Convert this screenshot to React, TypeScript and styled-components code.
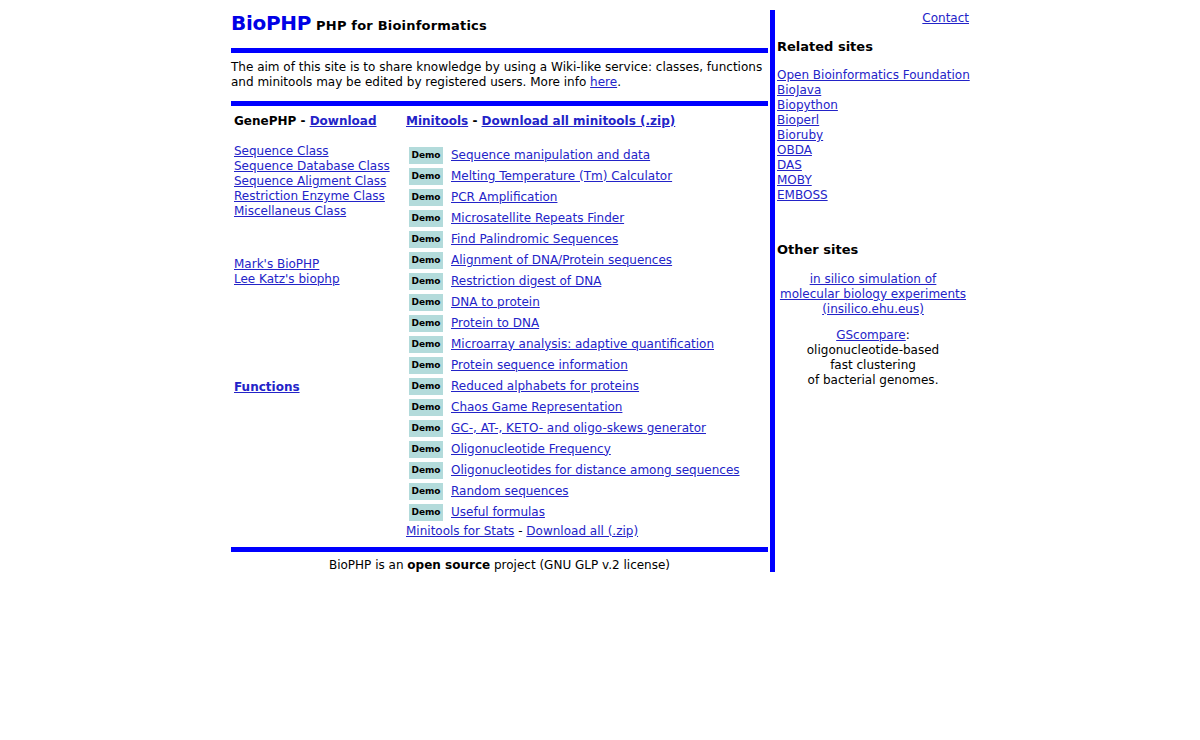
import React from "react";
import styled, { createGlobalStyle } from "styled-components";

const Global = createGlobalStyle`
  html, body { margin: 0; padding: 0; background: #fff; }
  body {
    font-family: "DejaVu Sans", Verdana, sans-serif;
    font-size: 12px;
    line-height: 15px;
    color: #000;
  }
`;

const Page = styled.div`
  width: 738px;
  margin: 10px auto 0;
  display: flex;
  align-items: flex-start;
  gap: 2px;
`;

const Main = styled.div`
  width: 537px;
  display: flex;
  flex-direction: column;
`;

const VBar = styled.div`
  width: 5px;
  background: #0000ff;
  height: 562px;
`;

const Side = styled.div`
  width: 192px;
  padding-top: 1px;
  display: flex;
  flex-direction: column;
  white-space: nowrap;
`;

const TitleRow = styled.div`
  display: flex;
  align-items: baseline;
  gap: 5px;
  height: 38px;
  padding-top: 1px;
  box-sizing: border-box;
  line-height: 24px;
`;

const Logo = styled.span`
  font-size: 20px;
  font-weight: bold;
  color: #0000e6;
  letter-spacing: -0.3px;
`;

const Tagline = styled.span`
  font-size: 13px;
  font-weight: bold;
  letter-spacing: 0.2px;
`;

const HBar = styled.div<{ $before?: number; $after?: number }>`
  height: 5px;
  background: #0000ff;
  margin-top: ${(p) => p.$before ?? 0}px;
  margin-bottom: ${(p) => p.$after ?? 0}px;
`;

const Intro = styled.p`
  margin: 0;
`;

const Link = styled.a<{ $bold?: boolean }>`
  color: #2323c8;
  text-decoration: underline;
  font-weight: ${(p) => (p.$bold ? "bold" : "normal")};
  cursor: pointer;
`;

const Columns = styled.div`
  display: flex;
  padding-top: 8px;
  padding-bottom: 8px;
`;

const LeftCol = styled.div`
  width: 172px;
  padding-left: 3px;
  display: flex;
  flex-direction: column;
`;

const MidCol = styled.div`
  flex: 1;
  display: flex;
  flex-direction: column;
`;

const Heading = styled.div`
  font-weight: bold;
  white-space: nowrap;
`;

const LinkList = styled.div<{ $top: number }>`
  display: flex;
  flex-direction: column;
  margin-top: ${(p) => p.$top}px;
`;

const DemoList = styled.div`
  display: flex;
  flex-direction: column;
  margin-top: 15.5px;
`;

const DemoRow = styled.div`
  height: 21px;
  display: flex;
  align-items: center;
  gap: 8px;
  padding-left: 3px;
  white-space: nowrap;
`;

const Badge = styled.span`
  width: 34px;
  height: 17px;
  background: #b3dbdb;
  font-size: 9px;
  font-weight: bold;
  display: flex;
  align-items: center;
  justify-content: center;
  line-height: 17px;
  padding-top: 1px;
  box-sizing: border-box;
`;

const StatsRow = styled.div`
  margin-top: 1px;
`;

const Footer = styled.div`
  text-align: center;
  margin-top: 6px;
`;

const ContactRow = styled.div`
  text-align: right;
`;

const SideHeading = styled.div<{ $top: number }>`
  font-size: 13px;
  font-weight: bold;
  line-height: 16px;
  margin-top: ${(p) => p.$top}px;
`;

const Centered = styled.div<{ $top: number }>`
  text-align: center;
  margin-top: ${(p) => p.$top}px;
`;

const classes = [
  "Sequence Class",
  "Sequence Database Class",
  "Sequence Aligment Class",
  "Restriction Enzyme Class",
  "Miscellaneus Class",
];

const demos = [
  "Sequence manipulation and data",
  "Melting Temperature (Tm) Calculator",
  "PCR Amplification",
  "Microsatellite Repeats Finder",
  "Find Palindromic Sequences",
  "Alignment of DNA/Protein sequences",
  "Restriction digest of DNA",
  "DNA to protein",
  "Protein to DNA",
  "Microarray analysis: adaptive quantification",
  "Protein sequence information",
  "Reduced alphabets for proteins",
  "Chaos Game Representation",
  "GC-, AT-, KETO- and oligo-skews generator",
  "Oligonucleotide Frequency",
  "Oligonucleotides for distance among sequences",
  "Random sequences",
  "Useful formulas",
];

const related = [
  "Open Bioinformatics Foundation",
  "BioJava",
  "Biopython",
  "Bioperl",
  "Bioruby",
  "OBDA",
  "DAS",
  "MOBY",
  "EMBOSS",
];

export default function App() {
  return (
    <>
      <Global />
      <Page>
        <Main>
          <TitleRow>
            <Logo>BioPHP</Logo>
            <Tagline>PHP for Bioinformatics</Tagline>
          </TitleRow>
          <HBar $after={7} />
          <Intro>
            The aim of this site is to share knowledge by using a Wiki-like service: classes, functions
            and minitools may be edited by registered users. More info <Link>here</Link>.
          </Intro>
          <HBar $before={11} />
          <Columns>
            <LeftCol>
              <Heading>
                GenePHP - <Link $bold>Download</Link>
              </Heading>
              <LinkList $top={15}>
                {classes.map((c) => (
                  <div key={c}>
                    <Link>{c}</Link>
                  </div>
                ))}
              </LinkList>
              <LinkList $top={38}>
                <div>
                  <Link>Mark's BioPHP</Link>
                </div>
                <div>
                  <Link>Lee Katz's biophp</Link>
                </div>
              </LinkList>
              <LinkList $top={93}>
                <div>
                  <Link $bold>Functions</Link>
                </div>
              </LinkList>
            </LeftCol>
            <MidCol>
              <Heading>
                <Link $bold>Minitools</Link> - <Link $bold>Download all minitools (.zip)</Link>
              </Heading>
              <DemoList>
                {demos.map((d) => (
                  <DemoRow key={d}>
                    <Badge>Demo</Badge>
                    <Link>{d}</Link>
                  </DemoRow>
                ))}
              </DemoList>
              <StatsRow>
                <Link>Minitools for Stats</Link> - <Link>Download all (.zip)</Link>
              </StatsRow>
            </MidCol>
          </Columns>
          <HBar />
          <Footer>
            BioPHP is an <b>open source</b> project (GNU GLP v.2 license)
          </Footer>
        </Main>
        <VBar />
        <Side>
          <ContactRow>
            <Link>Contact</Link>
          </ContactRow>
          <SideHeading $top={13}>Related sites</SideHeading>
          <LinkList $top={13}>
            {related.map((r) => (
              <div key={r}>
                <Link>{r}</Link>
              </div>
            ))}
          </LinkList>
          <SideHeading $top={39}>Other sites</SideHeading>
          <Centered $top={14}>
            <Link>
              in silico simulation of
              <br />
              molecular biology experiments
              <br />
              (insilico.ehu.eus)
            </Link>
          </Centered>
          <Centered $top={11}>
            <Link>GScompare</Link>:
            <br />
            oligonucleotide-based
            <br />
            fast clustering
            <br />
            of bacterial genomes.
          </Centered>
        </Side>
      </Page>
    </>
  );
}
